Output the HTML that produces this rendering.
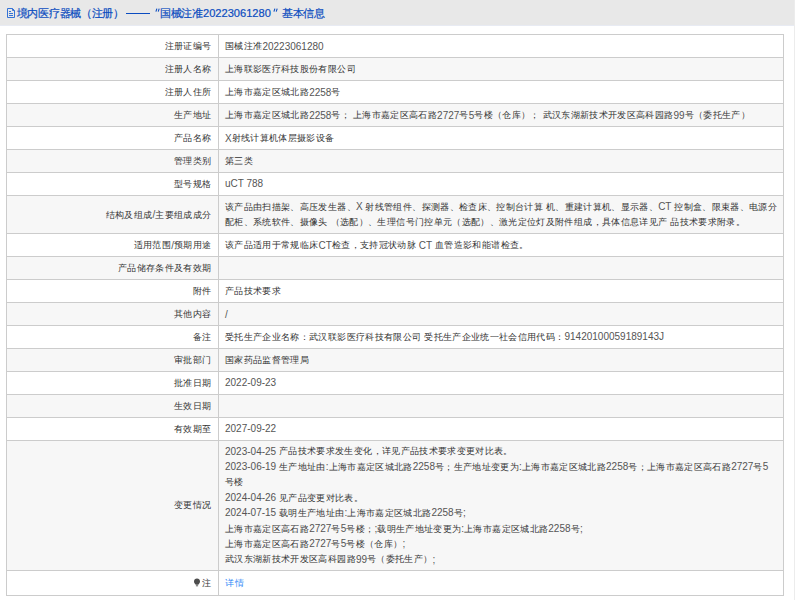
<!DOCTYPE html>
<html><head><meta charset="utf-8"><style>
html,body{margin:0;padding:0;background:#fff;width:796px;height:600px;overflow:hidden;position:relative}
body{font-family:"Liberation Sans",sans-serif;color:#333333}
.l,.v{-webkit-text-stroke:0px #333333}
i{-webkit-text-stroke:0;color:#555}
.hd{position:absolute;left:0;top:0;width:794px;height:25px;background:#e8e8e8;border-bottom:1px solid #e8ebf3}
.ht{position:absolute;top:4.5px;font-size:11px;letter-spacing:-0.3px;line-height:16px;color:#0b4cc0;white-space:nowrap;-webkit-text-stroke:0.2px #0b4cc0}
.hn{font-size:11.1px;letter-spacing:0}
.vr{position:absolute;left:794px;top:0;width:1px;height:600px;background:#ececec}
.tb{position:absolute;left:6px;top:34px;width:776px;height:560px;border:1px solid #cccccc}
.r{position:absolute;left:7px;width:776px}
.hl{position:absolute;left:7px;width:776px;height:1px;background:#cccccc}
.vl{position:absolute;left:218px;top:35px;width:1px;height:560px;background:#cccccc}
.l{position:absolute;right:571.65px;text-align:right;font-size:9px;letter-spacing:0.35px;line-height:15.4px;white-space:nowrap}
.v{position:absolute;left:218.00px;font-size:9px;letter-spacing:0.35px;line-height:15.4px;white-space:nowrap}
i{font-style:normal;font-size:10px;letter-spacing:0;line-height:0;position:relative;top:0.4px}
a{color:#2d88f7;letter-spacing:0.8px}
.bulb{vertical-align:-0.6px;margin-right:1.5px}
</style></head><body>
<div class="hd"></div>
<svg style="position:absolute;left:0;top:0" width="20" height="20" viewBox="0 0 20 20"><path d="M7.5 8.5H12.5L14.5 10.5V17.5H7.5Z" fill="none" stroke="#3573d6" stroke-width="1"/><path d="M12.5 8.5V10.5H14.5" fill="none" stroke="#3573d6" stroke-width="1"/><path d="M9 11.5H11M9 13.5H13M9 15.5H13" stroke="#3573d6" stroke-width="1"/></svg>
<div class="ht" style="left:16.8px">境内医疗器械（注册）</div>
<div style="position:absolute;left:126px;top:13px;width:23.6px;height:1px;background:#0b4cc0"></div>
<svg style="position:absolute;left:155px;top:8px" width="6" height="5" viewBox="0 0 6 5"><path d="M1.9 0.6L0.9 3.6M4.2 0.6L3.2 3.6" stroke="#0b4cc0" stroke-width="1.1" fill="none"/></svg>
<div class="ht" style="left:160px">国械注准</div>
<div class="ht hn" style="left:203px">20223061280</div>
<svg style="position:absolute;left:273px;top:8px" width="6" height="5" viewBox="0 0 6 5"><path d="M1.9 0.6L0.9 3.6M4.2 0.6L3.2 3.6" stroke="#0b4cc0" stroke-width="1.1" fill="none"/></svg>
<div class="ht" style="left:282px">基本信息</div>
<div class="vr"></div>
<div class="tb"></div>
<div class="r" style="top:35px;height:22px;background:#fff"><div class="l" style="top:4.38px">注册证编号</div><div class="v" style="top:4.38px">国械注准<i>20223061280</i></div></div><div class="hl" style="top:57px"></div><div class="r" style="top:58px;height:22px;background:#f7f7f7"><div class="l" style="top:4.33px">注册人名称</div><div class="v" style="top:4.33px">上海联影医疗科技股份有限公司</div></div><div class="hl" style="top:80px"></div><div class="r" style="top:81px;height:22px;background:#fff"><div class="l" style="top:4.28px">注册人住所</div><div class="v" style="top:4.28px">上海市嘉定区城北路<i>2258</i>号</div></div><div class="hl" style="top:103px"></div><div class="r" style="top:104px;height:22px;background:#f7f7f7"><div class="l" style="top:4.22px">生产地址</div><div class="v" style="top:4.22px">上海市嘉定区城北路<i>2258</i>号； 上海市嘉定区高石路<i>2727</i>号<i>5</i>号楼（仓库）； 武汉东湖新技术开发区高科园路<i>99</i>号（委托生产）</div></div><div class="hl" style="top:126px"></div><div class="r" style="top:127px;height:22px;background:#fff"><div class="l" style="top:4.17px">产品名称</div><div class="v" style="top:4.17px"><i>X</i>射线计算机体层摄影设备</div></div><div class="hl" style="top:149px"></div><div class="r" style="top:150px;height:22px;background:#f7f7f7"><div class="l" style="top:4.12px">管理类别</div><div class="v" style="top:4.12px">第三类</div></div><div class="hl" style="top:172px"></div><div class="r" style="top:173px;height:22px;background:#fff"><div class="l" style="top:4.07px">型号规格</div><div class="v" style="top:3.87px"><i>uCT 788</i></div></div><div class="hl" style="top:195px"></div><div class="r" style="top:196px;height:37px;background:#f7f7f7"><div class="l" style="top:11.68px">结构及组成<i>/</i>主要组成成分</div><div class="v" style="top:3.98px">该产品由扫描架、高压发生器、<i>X</i> 射线管组件、探测器、检查床、控制台计算 机、重建计算机、显示器、<i>CT</i> 控制盒、限束器、电源分<br>配柜、系统软件、摄像头 （选配）、生理信号门控单元（选配）、激光定位灯及附件组成，具体信息详见产 品技术要求附录。</div></div><div class="hl" style="top:233px"></div><div class="r" style="top:234px;height:22px;background:#fff"><div class="l" style="top:4.28px">适用范围<i>/</i>预期用途</div><div class="v" style="top:4.28px">该产品适用于常规临床<i>CT</i>检查，支持冠状动脉 <i>CT</i> 血管造影和能谱检查。</div></div><div class="hl" style="top:256px"></div><div class="r" style="top:257px;height:22px;background:#f7f7f7"><div class="l" style="top:4.22px">产品储存条件及有效期</div><div class="v" style="top:4.22px"></div></div><div class="hl" style="top:279px"></div><div class="r" style="top:280px;height:22px;background:#fff"><div class="l" style="top:4.17px">附件</div><div class="v" style="top:4.17px">产品技术要求</div></div><div class="hl" style="top:302px"></div><div class="r" style="top:303px;height:22px;background:#f7f7f7"><div class="l" style="top:4.12px">其他内容</div><div class="v" style="top:4.12px"><i>/</i></div></div><div class="hl" style="top:325px"></div><div class="r" style="top:326px;height:22px;background:#fff"><div class="l" style="top:4.07px">备注</div><div class="v" style="top:4.07px">受托生产企业名称：武汉联影医疗科技有限公司 受托生产企业统一社会信用代码：<i>91420100059189143J</i></div></div><div class="hl" style="top:348px"></div><div class="r" style="top:349px;height:22px;background:#f7f7f7"><div class="l" style="top:4.02px">审批部门</div><div class="v" style="top:4.02px">国家药品监督管理局</div></div><div class="hl" style="top:371px"></div><div class="r" style="top:372px;height:22px;background:#fff"><div class="l" style="top:3.97px">批准日期</div><div class="v" style="top:3.77px"><i>2022-09-23</i></div></div><div class="hl" style="top:394px"></div><div class="r" style="top:395px;height:22px;background:#f7f7f7"><div class="l" style="top:3.93px">生效日期</div><div class="v" style="top:3.93px"></div></div><div class="hl" style="top:417px"></div><div class="r" style="top:418px;height:22px;background:#fff"><div class="l" style="top:3.87px">有效期至</div><div class="v" style="top:3.67px"><i>2027-09-22</i></div></div><div class="hl" style="top:440px"></div><div class="r" style="top:441px;height:129px;background:#f7f7f7"><div class="l" style="top:57.37px">变更情况</div><div class="v" style="top:3.47px"><i>2023-04-25</i> 产品技术要求发生变化，详见产品技术要求变更对比表。<br><i>2023-06-19</i> 生产地址由<i>:</i>上海市嘉定区城北路<i>2258</i>号；生产地址变更为<i>:</i>上海市嘉定区城北路<i>2258</i>号；上海市嘉定区高石路<i>2727</i>号<i>5</i><br>号楼<br><i>2024-04-26</i> 见产品变更对比表。<br><i>2024-07-15</i> 载明生产地址由<i>:</i>上海市嘉定区城北路<i>2258</i>号<i>;</i><br>上海市嘉定区高石路<i>2727</i>号<i>5</i>号楼；<i>;</i>载明生产地址变更为<i>:</i>上海市嘉定区城北路<i>2258</i>号<i>;</i><br>上海市嘉定区高石路<i>2727</i>号<i>5</i>号楼（仓库）<i>;</i><br>武汉东湖新技术开发区高科园路<i>99</i>号（委托生产）<i>;</i></div></div><div class="hl" style="top:570px"></div><div class="r" style="top:571px;height:24px;background:#fff"><div class="l" style="top:5.15px"><i><svg class="bulb" width="8" height="9" viewBox="0 0 8 9"><path d="M4 0.4C2.2 0.4 1 1.7 1 3.4c0 1.2 0.6 1.9 1.2 2.5l0.5 0.8h2.6l0.5-0.8C6.4 5.3 7 4.6 7 3.4 7 1.7 5.8 0.4 4 0.4z" fill="#4d4d4d"/><rect x="2.9" y="7" width="2.2" height="1.4" fill="#8a8a8a"/></svg></i>注</div><div class="v" style="top:5.15px"><a>详情</a></div></div>
<div class="vl"></div>
</body></html>
